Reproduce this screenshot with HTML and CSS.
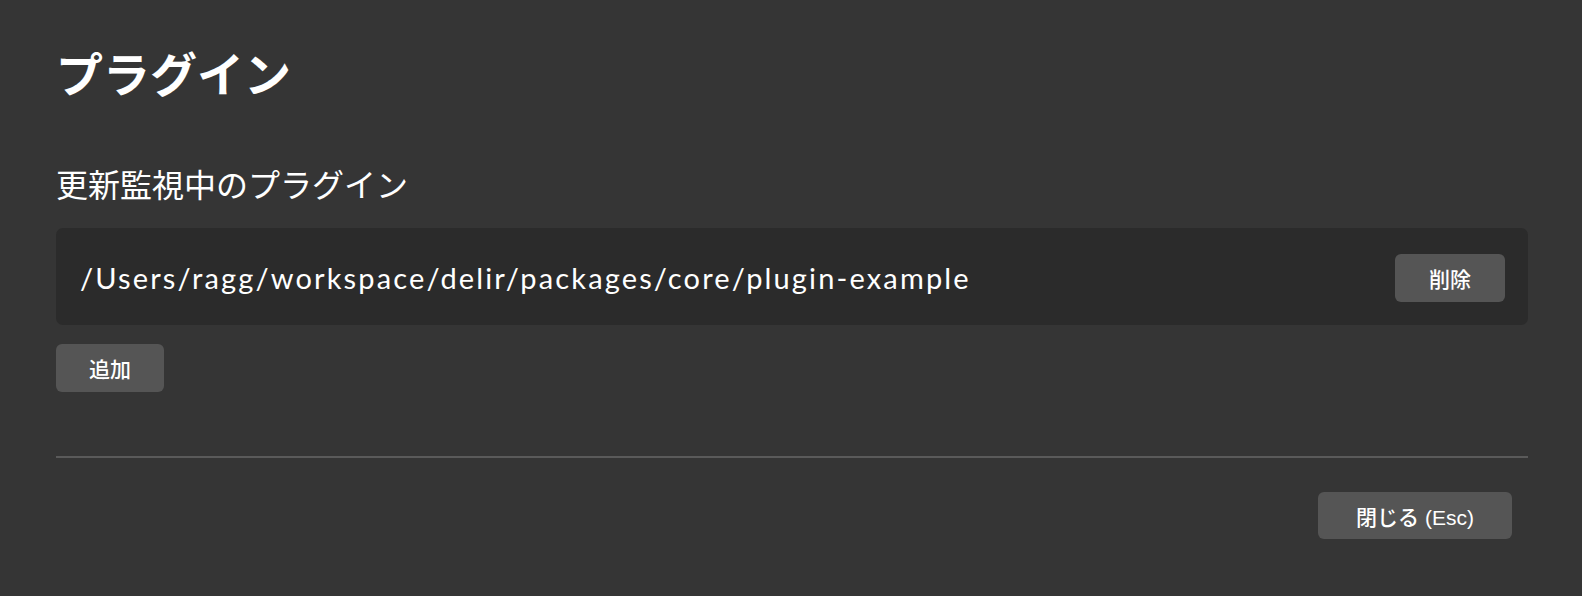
FILE: index.html
```html
<!DOCTYPE html>
<html lang="ja">
<head>
<meta charset="utf-8">
<title>プラグイン</title>
<link rel="stylesheet" href="styles.css">
</head>
<body>
<div class="container">
  <h1 class="title">プラグイン</h1>
  <h2 class="subtitle">更新監視中のプラグイン</h2>
  <div class="panel">
    <span class="path">/Users/ragg/workspace/delir/packages/core/plugin-example</span>
    <button class="btn btn-delete">削除</button>
  </div>
  <button class="btn btn-add">追加</button>
  <hr class="divider">
  <div class="footer">
    <button class="btn btn-close">閉じる (Esc)</button>
  </div>
</div>
</body>
</html>
```

FILE: styles.css
```css
html, body {
  margin: 0;
  padding: 0;
  background: #353535;
  color: #ffffff;
  font-family: "Noto Sans CJK JP", "Noto Sans", sans-serif;
}

.container {
  padding: 42px 54px 0 56px;
}

.title {
  margin: 0;
  font-size: 47px;
  font-weight: 700;
  line-height: 60px;
  height: 60px;
}

.subtitle {
  margin: 61px 0 0 0;
  font-size: 32px;
  font-weight: 400;
  line-height: 40px;
  height: 40px;
}

.panel {
  margin-top: 25px;
  height: 97px;
  box-sizing: border-box;
  background: #2b2b2b;
  border-radius: 7px;
  display: flex;
  align-items: center;
  justify-content: space-between;
  padding: 2px 23px 0 24px;
}

.path {
  font-family: "Lato", "Noto Sans", sans-serif;
  font-size: 29px;
  line-height: 40px;
  letter-spacing: 2.15px;
}

.btn {
  background: #555555;
  color: #ffffff;
  border: none;
  border-radius: 6px;
  font-family: "Liberation Sans", "Noto Sans CJK JP", sans-serif;
  font-size: 21px;
  font-weight: 500;
  height: 48px;
  padding: 0;
  display: block;
}

.btn-add {
  margin-top: 19px;
  width: 108px;
}

.btn-delete {
  width: 110px;
}

.divider {
  margin: 64px 0 0 0;
  border: none;
  height: 2px;
  background: #5a5a5a;
}

.footer {
  display: flex;
  justify-content: flex-end;
  padding-right: 16px;
  margin-top: 34px;
}

.btn-close {
  width: 194px;
  height: 47px;
}
```
